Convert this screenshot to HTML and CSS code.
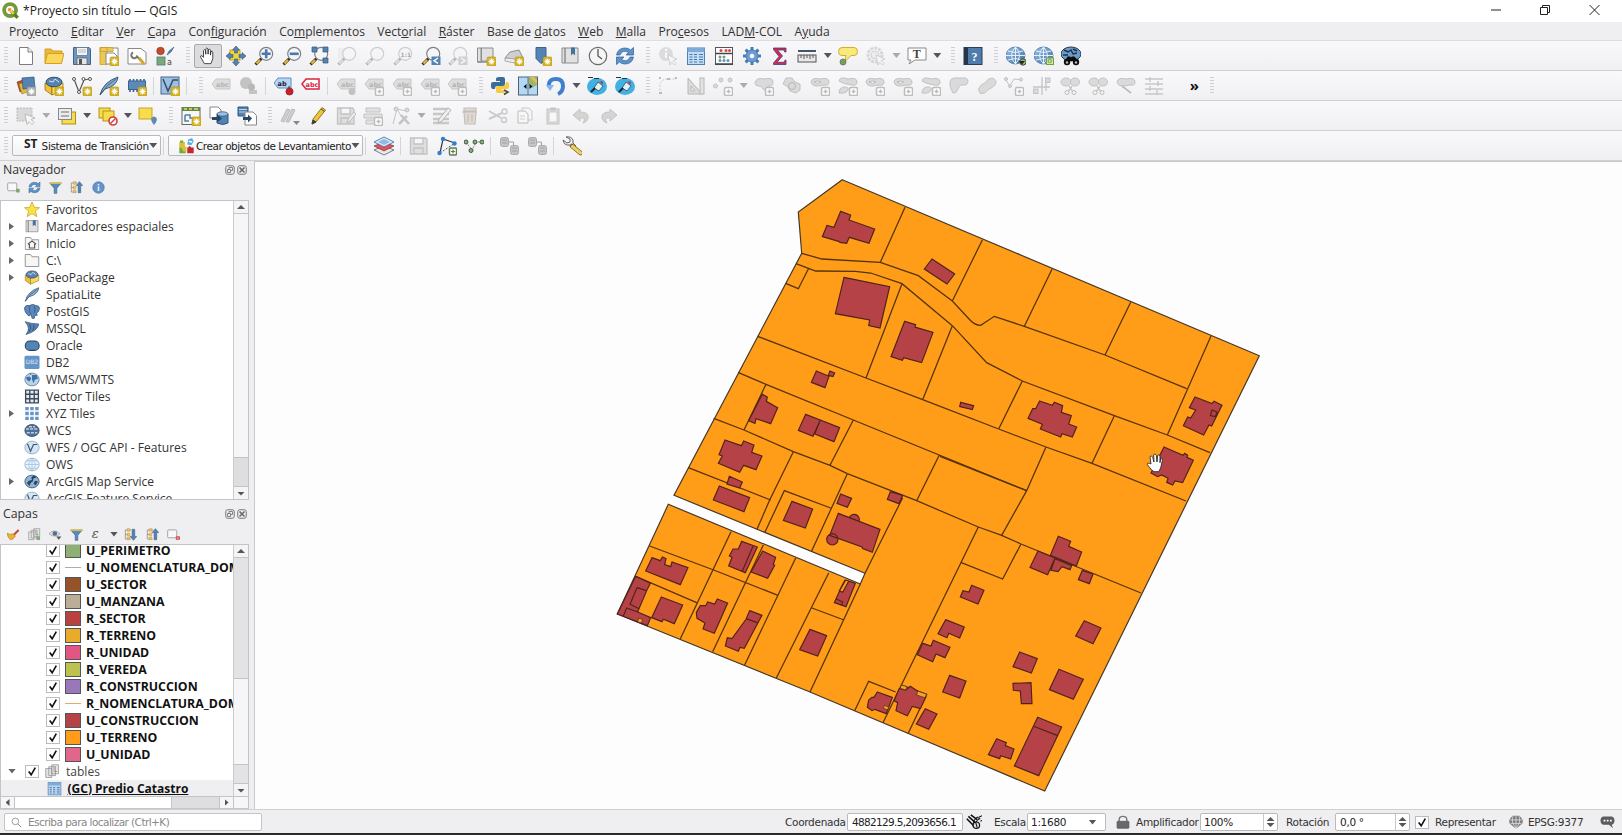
FILE: index.html
```html
<!DOCTYPE html>
<html lang="es">
<head>
<meta charset="utf-8">
<title>*Proyecto sin título — QGIS</title>
<link rel="stylesheet" href="styles.css">
</head>
<body>
<svg class="defs" aria-hidden="true">
<defs>
<linearGradient id="gb" x1="0" y1="0" x2="1" y2="1"><stop offset="0" stop-color="#9cc3ea"/><stop offset="1" stop-color="#3f6f9f"/></linearGradient>
<symbol id="star" viewBox="0 0 20 20"><rect x="11" y="11" width="9" height="9" rx="1.5" fill="#d9b526" stroke="#b0901c" stroke-width=".6"/><path d="M15.5 12.5v6M12.5 15.5h6M13.5 13.5l4 4M17.500 13.500l-4 4" stroke="#fff" stroke-width="1.100"/></symbol>
<symbol id="gbadge" viewBox="0 0 20 20"><rect x="11.500" y="11.500" width="8" height="8" rx="1.500" fill="#fff" stroke="#bdbcbc" stroke-width="1.500"/><path d="M15.500 13.500v4M13.500 15.500h4" stroke="#bdbcbc" stroke-width="1.500"/></symbol>
<symbol id="new" viewBox="0 0 20 20"><path d="M3.500 1.500h8.500l4.500 4.500v12.500h-13z" fill="#fff" stroke="#7c7c7c"/><path d="M12 1.500v4.500h4.500" fill="#eee" stroke="#7c7c7c"/></symbol>
<symbol id="open" viewBox="0 0 20 20"><path d="M1 17V3h6l2 2h9v3" fill="#e9b93c" stroke="#d5a021"/><path d="M1 17.500l2.500-10h16.500l-2.500 10z" fill="#fbd55c" stroke="#d5a021"/></symbol>
<symbol id="save" viewBox="0 0 20 20"><path d="M1.500 1.500h15.500l1.500 1.500v15.500h-17z" fill="#6d96c0" stroke="#3e648c"/><rect x="4.500" y="1.500" width="11" height="8" fill="#f1f3f5" stroke="#58799c" stroke-width=".8"/><path d="M6 4h8M6 6h8" stroke="#b9b9b9"/><rect x="5" y="12" width="10" height="6.500" fill="#e6e6e6" stroke="#666" stroke-width=".8"/><rect x="7" y="13" width="3" height="5" fill="#555"/></symbol>
<symbol id="lay" viewBox="0 0 20 20"><path d="M3 2h16v11h-16z" fill="#fff" stroke="#888"/><path d="M1 1.500h7v17H1zM1 1.500h13v4H1z" fill="#ecc952" stroke="#c5a032" stroke-width=".8"/><path d="M7 7h8l3 3v8H7z" fill="#fff" stroke="#888"/><use href="#star"/></symbol>
<symbol id="laym" viewBox="0 0 20 20"><path d="M1 2.500h13l5 4v11.500H1z" fill="#fff" stroke="#888"/><path d="M6 6.500a3 3 0 1 0 4 4l6 6" stroke="#777" fill="none" stroke-width="2"/><path d="M12 12l5 6" stroke="#d9a62a" stroke-width="3"/></symbol>
<symbol id="sty" viewBox="0 0 20 20"><circle cx="5.500" cy="5" r="3.800" fill="#c14b2c" stroke="#8c2f1a" stroke-width=".6"/><path d="M12 9l2-4 5-4-3 5z" fill="#5c87b4" stroke="#355a80" stroke-width=".6"/><rect x="2" y="11" width="8" height="8" fill="#7aa878" stroke="#4d7a7b" stroke-width=".8"/><text x="12" y="19" class="ti">a</text></symbol>
<symbol id="pan" viewBox="0 0 20 20"><path d="M6 18.500L2 11.500q-1-2 1-2l2 2V4q1-2 2.200 0l.3 4V2q1.200-2 2.400 0l.2 6 .4-5q1.500-1.500 2.200.5V9l.6-4q1.500-1 2 .8V13l-2 5.500z" fill="#fff" stroke="#222" stroke-width=".9"/></symbol>
<symbol id="pansel" viewBox="0 0 20 20"><rect x="4" y="4" width="10" height="10" fill="#f3d43b" stroke="#cda51f"/><path d="M10 0l3.500 4h-2v3h-3V4h-2zM10 20l3.500-4h-2v-3h-3v3h-2zM0 10l4-3.500v2h3v3H4v2zM20 10l-4-3.500v2h-3v3h3v2z" fill="#5583b3" stroke="#2f587f" stroke-width=".6"/></symbol>
<symbol id="mag" viewBox="0 0 20 20"><path d="M1.500 18.500l6-6" stroke="#3c3520" stroke-width="3"/><path d="M2.500 17.500l3.500-3.500" stroke="#e4bd35" stroke-width="2"/><circle cx="12.200" cy="7.800" r="6.500" fill="#f4f6f8" stroke="#808080" stroke-width="1.200"/></symbol>
<symbol id="zin" viewBox="0 0 20 20"><use href="#mag"/><path d="M12.200 3.300v9M7.700 7.800h9" stroke="#4a79ad" stroke-width="2.600"/></symbol>
<symbol id="zout" viewBox="0 0 20 20"><use href="#mag"/><path d="M7.700 7.800h9" stroke="#4a79ad" stroke-width="2.600"/></symbol>
<symbol id="zfull" viewBox="0 0 20 20"><use href="#mag"/><path d="M3 1h5v5H3zM14 1h5v5h-5zM14 12h5v5h-5z" fill="#5583b3" stroke="#2f587f" stroke-width=".7"/></symbol>
<symbol id="zsel" viewBox="0 0 20 20"><rect x="1" y="2" width="12" height="11" fill="#ddd"/><use href="#mag"/></symbol>
<symbol id="z11" viewBox="0 0 20 20"><use href="#mag"/><text x="7.500" y="10.500" class="t11">1:1</text></symbol>
<symbol id="zprev" viewBox="0 0 20 20"><use href="#mag"/><rect x="10.500" y="10.500" width="9" height="8.500" fill="#5583b3"/><path d="M17 12l-4 2.700 4 2.700" stroke="#fff" fill="none" stroke-width="1.400"/></symbol>
<symbol id="znext" viewBox="0 0 20 20"><use href="#mag"/><rect x="10.500" y="10.500" width="9" height="8.500" fill="#8b8b8b"/><path d="M13 12l4 2.700-4 2.700" stroke="#fff" fill="none" stroke-width="1.400"/></symbol>
<symbol id="map1" viewBox="0 0 20 20"><path d="M5 2h12v13H5zM1.500 2h4v14h-4z" fill="#e1e1e1" stroke="#8d8d8d"/><path d="M1.500 16h12" stroke="#8d8d8d" stroke-width="1.500"/><use href="#star"/></symbol>
<symbol id="map3" viewBox="0 0 20 20"><path d="M1 12l5-6 9-2 4 8-8 3z" fill="#cfcfcf" stroke="#8d8d8d"/><path d="M1 12l10 1 8-1v2l-8 3-10-2z" fill="#eee" stroke="#8d8d8d" stroke-width=".7"/><use href="#star"/></symbol>
<symbol id="bmk" viewBox="0 0 20 20"><path d="M4 1.500h10v13l-5 3-5-5z" fill="#5583b3" stroke="#3b648d"/><use href="#star"/></symbol>
<symbol id="bmks" viewBox="0 0 20 20"><path d="M2 2h3v15H2zM5 2h13v15H5z" fill="#e1e1e1" stroke="#8d8d8d"/><path d="M11 1.500h4v8l-2-2-2 2z" fill="#44709c"/></symbol>
<symbol id="clock" viewBox="0 0 20 20"><circle cx="10" cy="10" r="8.700" fill="#f5f5f5" stroke="#6d6d6d" stroke-width="1.200"/><path d="M10 3v7l4 3" stroke="#555" fill="none" stroke-width="1.300"/></symbol>
<symbol id="ref" viewBox="0 0 20 20"><path d="M1.500 9Q3 2 10 2q3.500 0 5.500 2l3-2.500V9H11l2.500-2.500Q7.500 3 5 9z" fill="#5c93cc" stroke="#2d608f" stroke-width=".7"/><path d="M18.500 11Q17 18 10 18q-3.500 0-5.500-2l-3 2.500V11H9l-2.500 2.500Q12.500 17 15 11z" fill="#5c93cc" stroke="#2d608f" stroke-width=".7"/></symbol>
<symbol id="ident" viewBox="0 0 20 20"><circle cx="8" cy="8" r="7" fill="#aaa"/><path d="M8 3v2M8 6.500v5.500" stroke="#fff" stroke-width="2"/><path d="M10 9l9 4-4 1.500 3 3-1.500 1.500-3-3-1.500 3z" fill="#fff" stroke="#888"/></symbol>
<symbol id="table" viewBox="0 0 20 20"><rect x="1.500" y="2" width="17" height="16.500" fill="#c4dcf3" stroke="#5180ae"/><rect x="1.500" y="2" width="17" height="4" fill="#7fabd8"/><path d="M3.500 8.500h3M8 8.500h3M13 8.500h4M3.500 11h3M8 11h3M13 11h4M3.500 13.500h3M8 13.500h3M13 13.500h4M3.500 16h3M8 16h3M13 16h4" stroke="#4279b1" stroke-width="1.200"/></symbol>
<symbol id="abac" viewBox="0 0 20 20"><rect x="1.500" y="1.500" width="17" height="17" fill="#fff" stroke="#555"/><path d="M1 18h18M2 7.500h16" stroke="#444" stroke-width="1.400"/><circle cx="7" cy="4.500" r="1.500" class="r"/><circle cx="12" cy="4.500" r="1.500" class="r"/><circle cx="15.500" cy="4.500" r="1.500" class="r"/><circle cx="6" cy="11" r="1.500" class="g"/><circle cx="10" cy="11" r="1.500" class="g"/><circle cx="14" cy="14.500" r="1.500" class="b"/><circle cx="6" cy="14.500" r="1.500" class="b"/><circle cx="10" cy="14.500" r="1.500" class="b"/></symbol>
<symbol id="gear" viewBox="0 0 20 20"><path d="M10 1v18M1 10h18M3.600 3.600l12.800 12.800M16.400 3.600L3.600 16.400" stroke="#487cb4" stroke-width="3"/><circle cx="10" cy="10" r="6" fill="#6c9dd0" stroke="#487cb4"/><circle cx="10" cy="10" r="2.300" fill="#f5f5f7"/></symbol>
<symbol id="sigma" viewBox="0 0 20 20"><path d="M3.500 2h12.500v4h-1.200l-1-2H7.500l5 6-5.500 6.300h7l1.200-2.300H16V18.500H3.500V17L9 10.500 3.500 3.500z" fill="#d42b50" stroke="#4b3a80" stroke-width=".8"/></symbol>
<symbol id="ruler" viewBox="0 0 20 20"><path d="M1 5h18" stroke="#42556b" stroke-width="2"/><rect x="1" y="9" width="18" height="7" fill="#e8e8e8" stroke="#555"/><path d="M4 9v3M7 9v4M10 9v3M13 9v4M16 9v3" stroke="#555"/></symbol>
<symbol id="tip" viewBox="0 0 20 20"><path d="M4 1.500h12q3.500 0 3.500 4t-3.500 4h-3l-6 6 1-6H4Q.5 9.500.5 5.500t3.500-4z" fill="#fae97c" stroke="#cdb030"/><circle cx="5" cy="16" r="3" fill="#7d9d59" stroke="#4f7a6a" stroke-width=".8"/></symbol>
<symbol id="act" viewBox="0 0 20 20"><circle cx="9" cy="9" r="7" fill="none" stroke="#999" stroke-width="3" stroke-dasharray="3 1"/><circle cx="9" cy="9" r="4" fill="#ddd" stroke="#888"/><path d="M10 9l9 4-4 1.500 3 3-1.500 1.500-3-3-1.500 3z" fill="#fff" stroke="#888"/></symbol>
<symbol id="txt" viewBox="0 0 20 20"><path d="M1 2h18v12H8l-6 4 2-4H1z" fill="#fff" stroke="#8a8a8a"/><text x="5.800" y="11.800" class="tt">T</text></symbol>
<symbol id="help" viewBox="0 0 20 20"><rect x="1" y="1.500" width="18" height="17" fill="#4e7cac" stroke="#293f56"/><rect x="1" y="1.500" width="4" height="17" fill="#263645"/><text x="8.500" y="14.500" class="th">?</text></symbol>
<symbol id="globe" viewBox="0 0 20 20"><ellipse cx="9.500" cy="9.500" rx="9.500" ry="8.500" fill="url(#gb)" stroke="#456f99" stroke-width=".7"/><path d="M0 9.500h19M2 5q7.500 3 15 0M2 14q7.500-3 15 0M9.500 1v17M9.500 1q-8 8.500 0 17M9.500 1q8 8.500 0 17" fill="none" stroke="#e4f0fb" stroke-width="1"/></symbol>
<symbol id="globe1" viewBox="0 0 20 20"><use href="#globe"/><circle cx="17" cy="16" r="3.200" fill="#8fc070" stroke="#3a4a32"/><path d="M13 15h6l-3 3.500z" fill="#222"/></symbol>
<symbol id="globe2" viewBox="0 0 20 20"><use href="#globe"/><rect x="12.500" y="12" width="7" height="6.500" fill="#cfe5b0" stroke="#6fa03c"/><circle cx="15.700" cy="15" r="1.700" fill="none" stroke="#6fa03c"/></symbol>
<symbol id="globe3" viewBox="0 0 20 20"><ellipse cx="10" cy="8" rx="10" ry="7" fill="#6c9aca" stroke="#24384b"/><path d="M3 4l4 2 3-2 2 4 4-1M2 9h5M12 3l4 2" stroke="#1f3347" fill="none" stroke-width="1.500"/><path d="M4 15l2.500-4.500h2.500l1 1 1-1h2.500l3.500 4.500z" fill="#0c0c0c"/><circle cx="6" cy="16" r="3.200" fill="#0c0c0c"/><circle cx="15" cy="16" r="3.200" fill="#0c0c0c"/><circle cx="6" cy="16.500" r="1.200" fill="#bbb"/><circle cx="15" cy="16.500" r="1.200" fill="#bbb"/></symbol>
<symbol id="vlayer" viewBox="0 0 20 20"><path d="M1 6l9-3 3 9-9 4z" fill="#b84f2b" stroke="#813418" stroke-width=".6"/><path d="M3 8l10-3 3 9-10 4z" fill="#e3bb3b" stroke="#98761a" stroke-width=".6"/><path d="M6 2l12-1 1 11-12 1z" fill="#5583b3" stroke="#2e5478" stroke-width=".7"/><use href="#star" class="off2"/></symbol>
<symbol id="gpkg" viewBox="0 0 20 20"><path d="M1 7l7 4v8l-7-5z" fill="#f0c134" stroke="#8a6612" stroke-width=".7"/><path d="M8 11l11-4v7l-11 5z" fill="#fbd95f" stroke="#8a6612" stroke-width=".7"/><ellipse cx="10" cy="6" rx="8" ry="4.800" fill="#5583b3" stroke="#24384b" stroke-width=".8"/><path d="M5 5l4 1 2-3 4 3" stroke="#dbe8f4" fill="none"/></symbol>
<symbol id="gpkgn" viewBox="0 0 20 20"><use href="#gpkg"/><use href="#star"/></symbol>
<symbol id="shp" viewBox="0 0 20 20"><path d="M2 3l5 13 5-12 5-1" fill="none" stroke="#555" stroke-width="1.200"/><circle cx="2" cy="3" r="1.500" fill="#fff" stroke="#555"/><circle cx="11.500" cy="3" r="1.500" fill="#fff" stroke="#555"/><circle cx="18" cy="3" r="1.500" fill="#fff" stroke="#555"/><circle cx="7" cy="16" r="1.500" fill="#fff" stroke="#555"/><use href="#star"/></symbol>
<symbol id="fea" viewBox="0 0 20 20"><path d="M1 19Q4 6 19 1q-1 9-13 12z" fill="#84aad1" stroke="#38597a"/><path d="M1 19Q8 8 17 3" stroke="#38597a" fill="none" stroke-width=".8"/></symbol>
<symbol id="fean" viewBox="0 0 20 20"><use href="#fea"/><use href="#star"/></symbol>
<symbol id="chip" viewBox="0 0 20 20"><path d="M3 3v13M6.500 3v13M10 3v13M13.500 3v13M17 3v13" stroke="#3b648d" stroke-width="1.600"/><rect x="1.500" y="5" width="17" height="8.500" fill="#5c8abb" stroke="#3b648d"/><use href="#star"/></symbol>
<symbol id="virt" viewBox="0 0 20 20"><rect x="1" y="1" width="18" height="17" fill="#9dbfe1" stroke="#45698e"/><path d="M3 3l5 12 5-11 5 0" fill="none" stroke="#374d63" stroke-width="1.500"/><use href="#star"/></symbol>
<symbol id="lab" viewBox="0 0 20 20"><path d="M1 8l4-5h14v10H5z" fill="#dedddd" stroke="#c8c7c7"/><text x="5" y="11" class="ta">abc</text></symbol>
<symbol id="labn" viewBox="0 0 20 20"><use href="#lab"/><use href="#gbadge"/></symbol>
<symbol id="labp" viewBox="0 0 20 20"><use href="#lab"/><circle cx="16" cy="15.500" r="3.500" fill="#c3c2c2"/></symbol>
<symbol id="pie" viewBox="0 0 20 20"><circle cx="7" cy="7" r="6" fill="#c4c3c3"/><path d="M10 12v6h8v-4h-4v-2z" fill="#c4c3c3"/><circle cx="12.500" cy="11" r="3.500" fill="#b8b7b7"/></symbol>
<symbol id="labb" viewBox="0 0 20 20"><path d="M0 7l4-5h13v10H4z" fill="#b8d5f1" stroke="#5c8fc2"/><text x="3.500" y="10" class="ta dk">ab</text><path d="M15 10v4" stroke="#333"/><circle cx="15.500" cy="15.500" r="3.600" fill="#c3202b" stroke="#84141c" stroke-width=".6"/></symbol>
<symbol id="labr" viewBox="0 0 20 20"><path d="M1 8l4-5h13v10H5z" fill="#fff" stroke="#dc2340" stroke-width="1.500"/><text x="4.500" y="10.500" class="ta rd">abc</text></symbol>
<symbol id="py" viewBox="0 0 20 20"><path d="M9 1h4q2 0 2 2v5q0 2-2 2H7q-2 0-2 3H3q-2 0-2-3V8q0-2 2-2h7V5H6V3q0-2 3-2z" fill="#3a6c9c"/><path d="M12 17H8q-2 0-2-2v-3q0-2 2-2h5q3 0 3-4h1q2 0 2 3v2q0 2-2 2h-6v1h4v1q0 2-3 2z" fill="#f6cb3d"/><path d="M14 14l4 2-4 2.500" stroke="#444" stroke-width="1.500" fill="none"/></symbol>
<symbol id="comp" viewBox="0 0 20 20"><rect x=".5" y="1" width="19" height="18" fill="#b3d8f4" stroke="#4b6378"/><path d="M10 1h9v8l-5 3-4-4z" fill="#9db46e"/><path d="M12 1l7 7v-4l-4-3z" fill="#e6c24b"/><path d="M10 1v18" stroke="#56748e"/><path d="M8.500 8v5l-3-2.500zM11.500 8v5l3-2.500z" fill="#111"/></symbol>
<symbol id="rel" viewBox="0 0 20 20"><path d="M3 11Q2 3 10 3q7 0 7 7 0 6-5 8" fill="none" stroke="#3f7fcf" stroke-width="4"/><path d="M0 9h8l-4 6z" fill="#85b4ea"/></symbol>
<symbol id="fish" viewBox="0 0 20 20"><ellipse cx="10" cy="10.500" rx="10" ry="8.500" fill="#3fb1e4"/><path d="M7 12l4-6 5 4-4 5z" fill="#e4eef4" stroke="#2b4a60" stroke-width=".8"/><path d="M4 16l4-4" stroke="#222" stroke-width="2"/><path d="M13 5l3 1-1 3z" fill="#c82a2a"/><path d="M1 1.500h5M7 2.500h5" stroke="#234" stroke-width="1.200"/></symbol>
<symbol id="cad1" viewBox="0 0 20 20"><path d="M2 18V9Q3 3 10 3h8" fill="none" stroke="#c8c7c7" stroke-dasharray="2 1.500"/><path d="M1 2h2M9 3h3M17 2h2M1 17h3" stroke="#bbb" stroke-width="2"/></symbol>
<symbol id="cad2" viewBox="0 0 20 20"><path d="M2 2l14 16H2zM5 10l4 5H5z" fill="#dcdbdb" stroke="#b8b7b7" fill-rule="evenodd"/><rect x="14" y="2" width="4" height="16" fill="#e4e3e3" stroke="#b8b7b7"/></symbol>
<symbol id="pts" viewBox="0 0 20 20"><circle cx="8" cy="4" r="2" class="gg"/><circle cx="17" cy="4" r="2" class="gg"/><circle cx="2.500" cy="10" r="2" class="gg"/><use href="#gbadge"/></symbol>
<symbol id="blob" viewBox="0 0 20 20"><path d="M1 7Q2 1 10 3q9-2 9 3 0 5-5 4-2 6-5 3-1-3-4-3-4 0-4-3z" class="gg"/><use href="#gbadge"/></symbol>
<symbol id="blob2" viewBox="0 0 20 20"><path d="M1 5Q2 0 10 3q9-2 9 3 0 4-5 3-9-1-13-4zM1 17q0-6 6-6 4 0 3 3-2 4-9 3z" class="gg"/><use href="#gbadge"/></symbol>
<symbol id="ring" viewBox="0 0 20 20"><path d="M1 6Q2 1 10 3q9-2 9 3 0 4-5 3-5 1-8 1-4 0-5-4z" class="gg"/><path d="M4 6q3-2 7 0-3 3-7 0z" fill="#f8f8f8" stroke="#bbb"/><use href="#gbadge"/></symbol>
<symbol id="hex" viewBox="0 0 20 20"><path d="M4 2h6l3 4 5 2v6l-4 3-6-2-2-4-5-3z" class="gg"/><circle cx="10" cy="10" r="3.500" fill="none" stroke="#b8b7b7"/></symbol>
<symbol id="horn" viewBox="0 0 20 20"><path d="M1 9Q0 1 8 2h9q4 3 0 7-7-1-8 4-2 5-5 4-2-3-3-8z" class="gg"/></symbol>
<symbol id="saus" viewBox="0 0 20 20"><path d="M2 12q2-4 6-5 3-5 7-5 6 2 3 7-3 3-6 4-5 6-9 4-2-2-1-5z" class="gg"/></symbol>
<symbol id="cutb" viewBox="0 0 20 20"><ellipse cx="6" cy="6" rx="5" ry="4" class="gg"/><ellipse cx="15" cy="6" rx="4.500" ry="4" class="gg"/><path d="M9 10l4 6M12 10l-4 6" stroke="#bbb" stroke-width="1.200"/><circle cx="7" cy="16.500" r="2" fill="#f5f5f5" stroke="#bbb"/><circle cx="14" cy="16.500" r="2" fill="#f5f5f5" stroke="#bbb"/></symbol>
<symbol id="tail" viewBox="0 0 20 20"><path d="M1 6Q2 1 10 3q9-2 9 3 0 4-5 3-5 1-8 1-4 0-5-4z" class="gg"/><path d="M6 10l9 7" stroke="#bbb" stroke-width="1.600"/></symbol>
<symbol id="vtx" viewBox="0 0 20 20"><path d="M1 3l5 7 4-7 8 1" fill="none" stroke="#c5c4c4"/><circle cx="2" cy="3" r="1.500" class="gg"/><circle cx="6" cy="10" r="1.500" class="gg"/><circle cx="17" cy="3.500" r="1.500" class="gg"/><use href="#gbadge"/></symbol>
<symbol id="crs" viewBox="0 0 20 20"><path d="M10 1v18M1 11h17M14 6v9" stroke="#c5c4c4" stroke-width="1.300"/><rect x="1.500" y="13" width="4.500" height="4.500" class="gg"/><rect x="13.500" y="2" width="4.500" height="4.500" class="gg"/></symbol>
<symbol id="algn" viewBox="0 0 20 20"><path d="M1 3h18M1 8h18M1 13h18M1 18h18" stroke="#c8c7c7" stroke-width="1.400"/><path d="M6 1v5M14 5v5M6 10v5M13 14v5" stroke="#c8c7c7" stroke-width="1.400"/></symbol>
<symbol id="sel" viewBox="0 0 20 20"><rect x="1" y="2" width="15" height="13" fill="#dad9d9" stroke="#bbb" stroke-dasharray="2 1"/><path d="M9 8l10 4-4 1.500 3 3-2 2-3-3-2 3z" fill="#f8f8f8" stroke="#bdbcbc"/></symbol>
<symbol id="self" viewBox="0 0 20 20"><rect x="5" y="6" width="13.500" height="12" fill="#f7dc4c" stroke="#ab8e1c"/><rect x="1.500" y="2.500" width="13" height="11" fill="#ececec" stroke="#888"/><path d="M4 6h8M4 10h8" stroke="#999" stroke-width="1.600"/></symbol>
<symbol id="desel" viewBox="0 0 20 20"><rect x="1" y="2" width="11" height="10" fill="#f7dc4c" stroke="#b59516"/><rect x="5" y="5" width="11" height="10" fill="#f7dc4c" stroke="#b59516"/><circle cx="15" cy="15" r="4" fill="#fff" stroke="#d43a3a" stroke-width="1.600"/><path d="M12.500 17.500l5-5" stroke="#d43a3a" stroke-width="1.500"/></symbol>
<symbol id="selv" viewBox="0 0 20 20"><rect x="1" y="2" width="13" height="11" fill="#f7dc4c" stroke="#c7a725"/><path d="M16 19q-4-5-2.500-7 2.500-3 5 0 1.500 2-2.500 7z" fill="#6288ad"/></symbol>
<symbol id="ant" viewBox="0 0 20 20"><rect x="1" y="1.500" width="18" height="17" fill="#f7f7f7" stroke="#666"/><rect x="1" y="1" width="18" height="4" fill="#5c8a4d"/><path d="M3 3h3M8 3h3M13 3h4" stroke="#f5d55a" stroke-width="1.500"/><path d="M4 9h5v3h5v4M4 9v6h4" fill="none" stroke="#557da6" stroke-width="1.500"/><use href="#star"/></symbol>
<symbol id="dbin" viewBox="0 0 20 20"><path d="M1 1h8l3 3v8H1z" fill="#fff" stroke="#888"/><path d="M8 8v9q6 3 11 0V8z" fill="#5382b3" stroke="#2f587f"/><ellipse cx="13.500" cy="8" rx="5.500" ry="2.200" fill="#9dbfe1" stroke="#2f587f" stroke-width=".8"/><path d="M3 11h5V8.500l5 4-5 4V14H3z" fill="#26476a"/></symbol>
<symbol id="dbout" viewBox="0 0 20 20"><path d="M1 1h10v9H1z" fill="#5382b3" stroke="#2f587f"/><path d="M2 3.500h8M2 6h8" stroke="#bdd4ea"/><path d="M8 6h8l3.500 3.500V19H8z" fill="#fff" stroke="#888"/><path d="M6 11h5V8.500l4 4-4 4V14H6z" fill="#26476a"/></symbol>
<symbol id="pens" viewBox="0 0 20 20"><path d="M1 15L7 3l3 1-6 12zM6 16L12 3l3 1-6 12z" fill="#cfcece" stroke="#bbbaba"/><path d="M13 15h7l-3.500 4z" fill="#888"/></symbol>
<symbol id="pen" viewBox="0 0 20 20"><path d="M4 18l1-5L14 1.500l3.500 2.500L8 16z" fill="#f1c62f" stroke="#8a6a1c" stroke-width=".9"/><path d="M4 18l1-4 3 2zM13 3l3.500 2.500" fill="#333" stroke="#444"/></symbol>
<symbol id="saveg" viewBox="0 0 20 20"><path d="M1.500 2h15l1.500 1.500V18H1.500zM5 2v6h9V2M5 18v-6h9v6" fill="#dfdede" stroke="#c3c2c2" stroke-width="1.300"/></symbol>
<symbol id="saven" viewBox="0 0 20 20"><use href="#saveg"/><path d="M11 17l1-4 6-7 2 2-6 7z" fill="#eee" stroke="#bbb"/></symbol>
<symbol id="addf" viewBox="0 0 20 20"><path d="M3 2h14v4H3zM1 8h18v4H1zM3 14h9v4H3z" fill="#e2e1e1" stroke="#c3c2c2"/><use href="#gbadge"/></symbol>
<symbol id="vt" viewBox="0 0 20 20"><path d="M2 18L6 3l9 2M6 3l4 7" fill="none" stroke="#c5c4c4"/><circle cx="5" cy="3" r="2" class="gg"/><circle cx="16" cy="4" r="2" class="gg"/><path d="M8 18l8-8M10 9l8 9" stroke="#c5c4c4" stroke-width="2.500"/></symbol>
<symbol id="multi" viewBox="0 0 20 20"><path d="M1 3h16M1 8h16M1 13h16M1 17h16" stroke="#c8c7c7" stroke-width="2.500"/><path d="M6 17l1-4L16 2l3 2-9 11z" fill="#eee" stroke="#b5b4b4"/></symbol>
<symbol id="del" viewBox="0 0 20 20"><path d="M2 6h15M4 2h12v3H4zM4 6h12l-1 12H5zM8 8v8M12 8v8" fill="#e0d9d4" stroke="#c4beba" stroke-width="1.200"/></symbol>
<symbol id="cut" viewBox="0 0 20 20"><path d="M1 5l12 7M1 13l13-6" stroke="#cccbcb" stroke-width="2"/><circle cx="16.500" cy="5.500" r="2.500" fill="none" stroke="#cccbcb" stroke-width="1.500"/><circle cx="16" cy="14" r="2.500" fill="none" stroke="#cccbcb" stroke-width="1.500"/></symbol>
<symbol id="copy" viewBox="0 0 20 20"><path d="M7 2h7l3 3v9H7z" fill="#f4f4f4" stroke="#cbcaca"/><path d="M3 5h7l3 3v9H3z" fill="#f7f7f7" stroke="#bdbcbc"/><path d="M5 10h5M5 13h5" stroke="#ccc"/></symbol>
<symbol id="paste" viewBox="0 0 20 20"><rect x="4" y="3" width="12" height="15" fill="#dcdbdb" stroke="#c5c4c4"/><rect x="6" y="6" width="8" height="10" fill="#f7f7f7" stroke="#ccc"/><rect x="7.500" y="1.500" width="5" height="3" fill="#c5c4c4"/></symbol>
<symbol id="undo" viewBox="0 0 20 20"><path d="M2 9l7-6v3q9 0 8 6-1 4-5 5 4-6-3-5v3z" fill="#d6d4d2" stroke="#c5c4c3"/></symbol>
<symbol id="redo" viewBox="0 0 20 20"><path d="M18 9l-7-6v3q-9 0-8 6 1 4 5 5-4-6 3-5v3z" fill="#d6d4d2" stroke="#c5c4c3"/></symbol>
<symbol id="stack" viewBox="0 0 20 20"><path d="M10 10l10 4-10 5L0 14z" fill="#e9e9ee" stroke="#404b6b" stroke-width=".7"/><path d="M10 6l10 4-10 5L0 10z" fill="#e2535a" stroke="#8c2e38" stroke-width=".7"/><path d="M10 1l10 5-10 5L0 6z" fill="#dceaf8" stroke="#33689c" stroke-width=".8"/><path d="M10 3l6 3-6 3-6-3z" fill="#8fbce6"/></symbol>
<symbol id="tri" viewBox="0 0 20 20"><path d="M3 17L6 3l12 4" fill="none" stroke="#333" stroke-width="1.200"/><path d="M3 17l15-10" stroke="#555" stroke-dasharray="2 1.500"/><circle cx="6" cy="3" r="2.200" fill="#2f7fd6"/><circle cx="17.500" cy="7.500" r="2.200" fill="#2f7fd6"/><circle cx="2.500" cy="17" r="2.200" fill="#2f7fd6"/><rect x="12.500" y="12" width="7" height="7" rx="1" fill="#fff" stroke="#5c7d52" stroke-width="1.500"/><path d="M16 13.500v4M14 15.500h4" stroke="#5c7d52" stroke-width="1.200"/></symbol>
<symbol id="nodes" viewBox="0 0 20 20"><path d="M2 6l6 8 4-8h7" fill="none" stroke="#888" stroke-dasharray="2 1"/><circle cx="2" cy="6" r="2" class="gn"/><circle cx="11" cy="6" r="2" class="gn"/><circle cx="18" cy="6" r="2" class="gn"/><circle cx="7" cy="14.500" r="2" class="gn"/></symbol>
<symbol id="dbs" viewBox="0 0 20 20"><rect x="1.500" y="1.500" width="8" height="9" rx="2" fill="#c6c5c5" stroke="#acabab"/><rect x="11.500" y="9.500" width="8" height="9" rx="2" fill="#c6c5c5" stroke="#acabab"/><path d="M9.500 6h5v4M3 4h5M3 7h5M13 12h5M13 15h5" fill="none" stroke="#a4a3a3"/></symbol>
<symbol id="wrench" viewBox="0 0 20 20"><path d="M1 4l4 3 3-1 0-3-4-2q5-1 7 3v3l3 3-3 2-3-3q-6 1-7-5z" fill="#eee" stroke="#666"/><path d="M10 10l8.500 7" stroke="#806a22" stroke-width="4.500" stroke-linecap="round"/><path d="M10.500 10.500l8 6.500" stroke="#edd067" stroke-width="3" stroke-linecap="round"/></symbol>
<symbol id="fav" viewBox="0 0 20 20"><path d="M10 0l3 7 7 .5-5.500 4.500 2 7.500L10 15.500 3.500 19.500l2-7.500L0 7.500 7 7z" fill="#fae14a" stroke="#c6a526"/></symbol>
<symbol id="fold" viewBox="0 0 20 20"><path d="M1 18V2h7l2 3h9v13z" fill="#f6f6f6" stroke="#8d8d8d" stroke-width="1.200"/></symbol>
<symbol id="home" viewBox="0 0 20 20"><use href="#fold"/><path d="M4.500 11l5.500-4.500 5.500 4.500M6.500 10.500V16h7v-5.500" fill="none" stroke="#555" stroke-width="1.500"/></symbol>
<symbol id="pg" viewBox="0 0 20 20"><path d="M0 5q1-4 7-3 4-3 8 0 5 0 5 4-1 5-4 6l1 3h-3l-1 4h-3l-1-5-3 2Q3 14 2 12 0 9 0 5z" fill="#5b89b9" stroke="#2f5275"/><path d="M7 3q-1 6 1 10M13 3q2 4 0 9" fill="none" stroke="#2f5275"/></symbol>
<symbol id="ms" viewBox="0 0 20 20"><path d="M1 1q9 3 18 3-1 9-17 14 7-8-1-17z" fill="#5583b3" stroke="#335a80"/><path d="M7 4q3 5-1 11M12 5q2 4-1 8" stroke="#28496a" fill="none"/></symbol>
<symbol id="ora" viewBox="0 0 20 20"><rect x="1" y="4" width="18.500" height="12.500" rx="6" fill="#5284ba" stroke="#2b415a" stroke-width="1.400"/></symbol>
<symbol id="db2" viewBox="0 0 20 20"><rect x="0" y="1" width="20" height="17.500" rx="2" fill="#6595c8"/><text x="1.500" y="12.500" class="td">DB2</text></symbol>
<symbol id="wms" viewBox="0 0 20 20"><ellipse cx="10" cy="10" rx="9.500" ry="8.500" fill="#b8d3ec" stroke="#4d7298"/><path d="M2 7l5-1 2 3-3 4-3-3zM10 4l6 0 2 5-4 1-2 5-2-5zM6 2l4 0-2 2z" fill="#3f6f9f"/></symbol>
<symbol id="vtl" viewBox="0 0 20 20"><path d="M1.500 1.500h17v17h-17zM7 1v18M13 1v18M1 7h18M1 13h18" fill="#e3ebf5" stroke="#3c4a5c" stroke-width="1.800"/></symbol>
<symbol id="xyz" viewBox="0 0 20 20"><path d="M1 3.500h18M1 10h18M1 16.500h18" stroke="#6595c8" stroke-width="4.600" stroke-dasharray="4.700 1.900"/></symbol>
<symbol id="wcs" viewBox="0 0 20 20"><ellipse cx="10" cy="10" rx="9.500" ry="8" fill="#4f7199" stroke="#2b3d52"/><path d="M2 8h16M3 13h14M6 5h8" stroke="#b9d0e8" stroke-width="1.700" stroke-dasharray="4 1.500"/></symbol>
<symbol id="wfs" viewBox="0 0 20 20"><ellipse cx="10" cy="10" rx="9.500" ry="8.500" fill="#d4e5f5" stroke="#7da0c2"/><path d="M4 5l4 10 4-9h5" fill="none" stroke="#40556b" stroke-width="1.600"/></symbol>
<symbol id="ows" viewBox="0 0 20 20"><ellipse cx="10" cy="10" rx="9.500" ry="8.500" fill="#eaf3fb" stroke="#7da7d0"/><path d="M1 10h18M3 5h14M3 15h14M10 1.500v17M10 1.500q-9 8.500 0 17M10 1.500q9 8.500 0 17" fill="none" stroke="#9ec0e2"/></symbol>
<symbol id="arc" viewBox="0 0 20 20"><ellipse cx="10" cy="10" rx="9.500" ry="8.500" fill="#8fb4da" stroke="#2e475f"/><path d="M3 12l4 4 1-4 3-2 1-4 5-2-5-2-3 3 1 3-4 1zM14 9l4 1-3 5-3-2z" fill="#2c435a"/></symbol>
<symbol id="addl" viewBox="0 0 20 20"><rect x="1" y="3" width="14" height="12" rx="1.500" fill="#f8f8f8" stroke="#999" stroke-width="1.300"/><rect x="14" y="12" width="5.500" height="5.500" rx="1" fill="#7da670"/></symbol>
<symbol id="reml" viewBox="0 0 20 20"><rect x="1" y="3" width="14" height="12" rx="1.500" fill="#f8f8f8" stroke="#999" stroke-width="1.300"/><rect x="13.500" y="12.500" width="6.500" height="5.500" rx="1" fill="#d5474c"/><path d="M15 15.300h3.500" stroke="#fff"/></symbol>
<symbol id="filt" viewBox="0 0 20 20"><path d="M1 3h18l-7 8v8H8v-8z" fill="#5b8bbd" stroke="#3a6790"/><path d="M1 1.500h18v3H1z" fill="#d9c160"/></symbol>
<symbol id="coll" viewBox="0 0 20 20"><path d="M2 3h9M2 3v14h8M2 10h5" stroke="#777" fill="none"/><path d="M5 1h4v4H5zM5 8h4v4H5zM5 14h4v4H5z" fill="#f2c660" stroke="#c08a2d" stroke-width=".7"/><path d="M14.500 1l5 6h-3v11h-4V7h-3z" fill="#5583b3" stroke="#2f587f" stroke-width=".8"/></symbol>
<symbol id="expa" viewBox="0 0 20 20"><path d="M2 3h9M2 3v14h8M2 10h5" stroke="#777" fill="none"/><path d="M5 1h4v4H5zM5 8h4v4H5zM5 14h4v4H5z" fill="#f2c660" stroke="#c08a2d" stroke-width=".7"/><path d="M14.500 19l5-6h-3V2h-4v11h-3z" fill="#5583b3" stroke="#2f587f" stroke-width=".8"/></symbol>
<symbol id="info" viewBox="0 0 20 20"><circle cx="10" cy="10" r="8.800" fill="#6595c8" stroke="#41709e"/><path d="M10 4.500v2.500M10 8.500v7" stroke="#e4eefa" stroke-width="2.400"/></symbol>
<symbol id="brush" viewBox="0 0 20 20"><path d="M9 12l9-9" stroke="#c74a32" stroke-width="3"/><path d="M0 8q6 3 9 1l4 3q-3 6-8 6-4-4-5-10z" fill="#eab435" stroke="#b77d1d"/></symbol>
<symbol id="grp" viewBox="0 0 20 20"><path d="M1 6h8v12H1zM5 3.500h9v12H5zM9 1h9v12H9z" fill="#e4e4e4" stroke="#929292"/><path d="M12 4v6h4" fill="none" stroke="#8a8a8a"/></symbol>
<symbol id="grpn" viewBox="0 0 20 20"><use href="#grp"/><rect x="13" y="13" width="5.500" height="5.500" fill="#83ad78"/></symbol>
<symbol id="eye" viewBox="0 0 20 20"><path d="M0 9q8-9 17 0-8 7-17 0z" fill="#e6e6e6" stroke="#8f8f8f"/><circle cx="9" cy="8.500" r="3.600" fill="#506f93"/><path d="M11 13h8l-4 5z" fill="#555"/></symbol>
<symbol id="cen" viewBox="0 0 20 20"><path d="M9 16q-1-8 5-12l3 2q-6 3-6 10" fill="#fff" stroke="#222" stroke-width="1.400"/><path d="M1 6l8 8M3 3l9 8M6 1l8 6" stroke="#111" stroke-width="2"/><circle cx="13" cy="14" r="4" fill="#ddd" stroke="#111" stroke-width="1.500"/><path d="M12 10l2 7M16 4l4-2M18 9l2-1" stroke="#111" stroke-width="1.300"/></symbol>
<symbol id="lock" viewBox="0 0 20 20"><path d="M4.500 9V7q0-5 5.500-5t5.500 5v2" fill="none" stroke="#777" stroke-width="2"/><rect x="1.500" y="9" width="17" height="10" rx="1" fill="#686868" stroke="#555"/></symbol>
<symbol id="gglobe" viewBox="0 0 20 20"><path d="M5 1h10l5 6-1 5-8 7h-2l-8-7-1-5z" fill="#7a7a7a"/><path d="M0 7h20M2 12h16M10 1v18M6 1q-4 9 4 18M14 1q4 9-4 18" fill="none" stroke="#eee"/></symbol>
<symbol id="bub" viewBox="0 0 20 20"><path d="M4 2h12q4 1 4 6t-4 6l2 5-6-5H4q-4-1-4-6t4-6z" fill="#5c5c5c"/><path d="M4.500 8h2.500M9 8h2.500M13.500 8H16" stroke="#fff" stroke-width="2.300"/></symbol>
<symbol id="lens" viewBox="0 0 20 20"><circle cx="8" cy="8" r="6" fill="none" stroke="#8a8a8a" stroke-width="1.500"/><path d="M12.500 12.500l6 6" stroke="#8a8a8a" stroke-width="1.800"/></symbol>
<symbol id="ck" viewBox="0 0 20 20"><path d="M4 10l4.500 6L16 3" fill="none" stroke="#111" stroke-width="3"/></symbol>
<symbol id="puz" viewBox="0 0 20 20"><path d="M1 5h7v7H1z" fill="#e0bf2f"/><path d="M2 3h4v3H2zM1 12h8v7H1z" fill="#6bab4c"/><path d="M3 11h7v6H6z" fill="#e0bf2f"/><path d="M12 12q2-4 4 0h3v7h-8v-7z" fill="#c0282c"/><path d="M11 8l1-6 5-2 2 4-3 5z" fill="#4fb0e8"/><path d="M13 4l4 1" stroke="#fff" stroke-width="2"/></symbol>
<symbol id="dkr" viewBox="0 0 20 20"><rect x="1.500" y="1.500" width="17" height="17" rx="4" fill="#eee" stroke="#777" stroke-width="2"/><path d="M5 9h6v6H5zM8 9V5h7v6h-4" fill="none" stroke="#777" stroke-width="1.800"/></symbol>
<symbol id="dkx" viewBox="0 0 20 20"><rect x="1.500" y="1.500" width="17" height="17" rx="4" fill="#eee" stroke="#777" stroke-width="2"/><path d="M5 5l10 10M15 5L5 15" stroke="#666" stroke-width="3"/></symbol>
</defs>
</svg>

<header class="title"><svg class="logo" viewBox="0 0 20 20"><circle cx="9.500" cy="9.500" r="7" fill="#fff" stroke="#74983a" stroke-width="4.500"/><circle cx="9" cy="9" r="2.200" fill="#ef9b3a"/><path d="M11 11l7.500 7.500" stroke="#578022" stroke-width="4"/><path d="M11 11l3 3" stroke="#f0cf3b" stroke-width="3"/></svg><span>*Proyecto sin título — QGIS</span>
<svg class="win" viewBox="0 0 110 12"><path d="M1 6h10M50.500 3.500h7v7h-7zM52.500 3.500v-2h7v7h-2M99.500 1l10 10M109.500 1l-10 10" fill="none" stroke="#222"/></svg></header>
<nav class="menu"><span>Pro<u>y</u>ecto</span><span><u>E</u>ditar</span><span><u>V</u>er</span><span><u>C</u>apa</span><span>Con<u>f</u>iguración</span><span>Co<u>m</u>plementos</span><span>Vect<u>o</u>rial</span><span><u>R</u>áster</span><span>Base de <u>d</u>atos</span><span><u>W</u>eb</span><span><u>M</u>alla</span><span>Pro<u>c</u>esos</span><span>LAD<u>M</u>-COL</span><span>A<u>y</u>uda</span></nav>

<div class="bar">
<div class="grp"><svg><use href="#new"/></svg><svg><use href="#open"/></svg><svg><use href="#save"/></svg><svg><use href="#lay"/></svg><svg><use href="#laym"/></svg><svg><use href="#sty"/></svg></div>
<div class="grp"><svg class="on"><use href="#pan"/></svg><svg><use href="#pansel"/></svg><svg><use href="#zin"/></svg><svg><use href="#zout"/></svg><svg><use href="#zfull"/></svg><svg class="off"><use href="#zsel"/></svg><svg class="off"><use href="#mag"/></svg><svg class="off"><use href="#z11"/></svg><svg><use href="#zprev"/></svg><svg class="off"><use href="#znext"/></svg><svg><use href="#map1"/></svg><svg><use href="#map3"/></svg><svg><use href="#bmk"/></svg><svg><use href="#bmks"/></svg><svg><use href="#clock"/></svg><svg><use href="#ref"/></svg></div>
<div class="grp"><svg class="off"><use href="#ident"/></svg><svg><use href="#table"/></svg><svg><use href="#abac"/></svg><svg><use href="#gear"/></svg><svg><use href="#sigma"/></svg><svg><use href="#ruler"/></svg><i class="ar"></i><svg><use href="#tip"/></svg><svg class="off"><use href="#act"/></svg><i class="ar dim"></i><svg><use href="#txt"/></svg><i class="ar"></i></div>
<div class="grp"><svg><use href="#help"/></svg></div>
<div class="grp"><svg><use href="#globe1"/></svg><svg><use href="#globe2"/></svg><svg><use href="#globe3"/></svg></div>
</div>
<div class="bar">
<div class="grp wide"><svg><use href="#vlayer"/></svg><svg><use href="#gpkgn"/></svg><svg><use href="#shp"/></svg><svg><use href="#fean"/></svg><svg><use href="#chip"/></svg><i class="sp"></i><svg><use href="#virt"/></svg><i class="sp"></i></div>
<div class="grp"><svg><use href="#lab"/></svg><svg><use href="#pie"/></svg><i class="sp w"></i><svg><use href="#labb"/></svg><svg><use href="#labr"/></svg><i class="sp w"></i><svg><use href="#labp"/></svg><svg><use href="#labn"/></svg><svg><use href="#labn"/></svg><svg><use href="#labn"/></svg><svg><use href="#labn"/></svg></div>
<div class="grp"><svg><use href="#py"/></svg><svg><use href="#comp"/></svg><svg><use href="#rel"/></svg><i class="ar"></i><svg><use href="#fish"/></svg><svg><use href="#fish"/></svg></div>
<div class="grp"><svg><use href="#cad1"/></svg><svg><use href="#cad2"/></svg><svg><use href="#pts"/></svg><i class="ar dim"></i><svg><use href="#blob"/></svg><svg><use href="#hex"/></svg><svg><use href="#ring"/></svg><svg><use href="#blob2"/></svg><svg><use href="#ring"/></svg><svg><use href="#ring"/></svg><svg><use href="#blob2"/></svg><svg><use href="#horn"/></svg><svg><use href="#saus"/></svg><svg><use href="#vtx"/></svg><svg><use href="#crs"/></svg><svg><use href="#cutb"/></svg><svg><use href="#cutb"/></svg><svg><use href="#tail"/></svg><svg><use href="#algn"/></svg></div>
<b class="more">»</b><div class="grp"></div>
</div>
<div class="bar">
<div class="grp"><svg><use href="#sel"/></svg><i class="ar dim"></i><svg><use href="#self"/></svg><i class="ar"></i><svg><use href="#desel"/></svg><i class="ar"></i><svg><use href="#selv"/></svg></div>
<div class="grp"><svg><use href="#ant"/></svg><svg><use href="#dbin"/></svg><svg><use href="#dbout"/></svg></div>
<div class="grp"><svg><use href="#pens"/></svg><svg><use href="#pen"/></svg><svg><use href="#saven"/></svg><svg><use href="#addf"/></svg><svg><use href="#vt"/></svg><i class="ar dim"></i><svg><use href="#multi"/></svg><svg><use href="#del"/></svg><svg><use href="#cut"/></svg><svg><use href="#copy"/></svg><svg><use href="#paste"/></svg><svg><use href="#undo"/></svg><svg><use href="#redo"/></svg></div>
</div>
<div class="bar">
<div class="grp"><div class="btn b1"><b>ST</b><span>Sistema de Transición</span><i class="ar"></i></div><i class="sp"></i><div class="btn b2"><svg><use href="#puz"/></svg><span>Crear objetos de Levantamiento</span><i class="ar"></i></div><i class="sp w"></i><svg><use href="#stack"/></svg><i class="sp w"></i><svg><use href="#saveg"/></svg><svg><use href="#tri"/></svg><svg><use href="#nodes"/></svg><i class="sp w"></i><svg><use href="#dbs"/></svg><svg><use href="#dbs"/></svg><i class="sp w"></i><svg><use href="#wrench"/></svg></div>
</div>

<main class="work">
<aside class="side">
<section class="nav">
<h2><span>Navegador</span><svg><use href="#dkr"/></svg><svg><use href="#dkx"/></svg></h2>
<div class="tools"><svg><use href="#addl"/></svg><svg><use href="#ref"/></svg><svg><use href="#filt"/></svg><svg><use href="#coll"/></svg><svg><use href="#info"/></svg></div>
<div class="box">
<ul class="tree">
<li><svg><use href="#fav"/></svg>Favoritos</li>
<li class="x"><svg><use href="#bmks"/></svg>Marcadores espaciales</li>
<li class="x"><svg><use href="#home"/></svg>Inicio</li>
<li class="x"><svg><use href="#fold"/></svg>C:\</li>
<li class="x"><svg><use href="#gpkg"/></svg>GeoPackage</li>
<li><svg><use href="#fea"/></svg>SpatiaLite</li>
<li><svg><use href="#pg"/></svg>PostGIS</li>
<li><svg><use href="#ms"/></svg>MSSQL</li>
<li><svg><use href="#ora"/></svg>Oracle</li>
<li><svg><use href="#db2"/></svg>DB2</li>
<li><svg><use href="#wms"/></svg>WMS/WMTS</li>
<li><svg><use href="#vtl"/></svg>Vector Tiles</li>
<li class="x"><svg><use href="#xyz"/></svg>XYZ Tiles</li>
<li><svg><use href="#wcs"/></svg>WCS</li>
<li><svg><use href="#wfs"/></svg>WFS / OGC API - Features</li>
<li><svg><use href="#ows"/></svg>OWS</li>
<li class="x"><svg><use href="#arc"/></svg>ArcGIS Map Service</li>
<li><svg><use href="#wfs"/></svg>ArcGIS Feature Service</li>
</ul>
<div class="vs v1"><i class="up"></i><i class="th1"></i><i class="th2"></i><i class="dn"></i></div>
</div>
</section>
<section class="cap">
<h2><span>Capas</span><svg><use href="#dkr"/></svg><svg><use href="#dkx"/></svg></h2>
<div class="tools"><svg><use href="#brush"/></svg><svg><use href="#grpn"/></svg><svg><use href="#eye"/></svg><svg><use href="#filt"/></svg><em>ε</em><i class="ar"></i><svg><use href="#expa"/></svg><svg><use href="#coll"/></svg><svg><use href="#reml"/></svg></div>
<div class="box">
<ul class="layers">
<li><svg class="c"><use href="#ck"/></svg><i class="s c1"></i><b>U_PERIMETRO</b></li>
<li><svg class="c"><use href="#ck"/></svg><i class="l c2"></i><b>U_NOMENCLATURA_DOMICILIARIA</b></li>
<li><svg class="c"><use href="#ck"/></svg><i class="s c3"></i><b>U_SECTOR</b></li>
<li><svg class="c"><use href="#ck"/></svg><i class="s c4"></i><b>U_MANZANA</b></li>
<li><svg class="c"><use href="#ck"/></svg><i class="s c5"></i><b>R_SECTOR</b></li>
<li><svg class="c"><use href="#ck"/></svg><i class="s c6"></i><b>R_TERRENO</b></li>
<li><svg class="c"><use href="#ck"/></svg><i class="s c7"></i><b>R_UNIDAD</b></li>
<li><svg class="c"><use href="#ck"/></svg><i class="s c8"></i><b>R_VEREDA</b></li>
<li><svg class="c"><use href="#ck"/></svg><i class="s c9"></i><b>R_CONSTRUCCION</b></li>
<li><svg class="c"><use href="#ck"/></svg><i class="l c10"></i><b>R_NOMENCLATURA_DOMICILIARIA</b></li>
<li><svg class="c"><use href="#ck"/></svg><i class="s c11"></i><b>U_CONSTRUCCION</b></li>
<li><svg class="c"><use href="#ck"/></svg><i class="s c12"></i><b>U_TERRENO</b></li>
<li><svg class="c"><use href="#ck"/></svg><i class="s c13"></i><b>U_UNIDAD</b></li>
<li class="tb"><svg class="c"><use href="#ck"/></svg><svg class="g"><use href="#grp"/></svg>tables</li>
<li class="gc"><svg class="g"><use href="#table"/></svg><b>(GC) Predio Catastro</b></li>
</ul>
<div class="vs v2"><i class="up"></i><i class="th1"></i><i class="th2"></i><i class="th3"></i><i class="dn"></i></div>
</div>
<div class="hs"><i class="lf"></i><i class="tr"></i><i class="hd"></i><i class="rt"></i></div>
</section>
</aside>
<div class="canvas">
<svg class="map" viewBox="255 162 1366 647">
<g class="land"><path d="M842.300 179.700L1259.300 355.700 1044.700 791 810 692 617.300 614 668.300 504.300 860.300 584 865 573.300 674 495.300 801.700 253.300 798.300 212z"/></g>
<g transform="translate(600 170) scale(.33333)"><g class="ln"><path d="M915 112L841 277M605 250L666 267 841 277 955 317 1057 393M588 281L647 303 766 304 812 309 906 341 1057 467M625 297L595 356 557 340M906 341L798 624M473 499L798 624 968 689 1196 777M414 607L498 643 760 750 1280 962M498 643L432 780M341 745L432 780 580 845 690 886 742 911M760 750L690 886M265 893L512 990M1018 855L950 992M1057 467L968 689"/></g>
<g class="bd"><path d="M722 124L752 135 747 150 824 177 807 220 748 202 740 220 720 217 716 214 667 200 681 166 702 172zM732 322L869 350 840 474 806 467 809 450 706 431zM914 454L947 464 945 471 999 487 965 578 911 563 907 571 873 560zM649 603L687 619 675 653 634 637zM690 603L704 609 699 620 685 616zM487 673L502 681 499 694 533 713 512 761 468 746 465 760 446 752zM617 733L661 750 639 799 595 781zM661 750L719 773 702 815 644 792zM375 810L424 827 431 813 462 825 455 847 486 858 468 899 431 886 419 907 355 880 367 858 357 854z"/></g></g>
<g transform="translate(920 170) scale(.33333)"><g class="ln"><path d="M187 210L97 393M97 393L150 450Q165 466 182 466L223 439 313 469 555 555 800 656M396 298L313 469M632 397L555 555M873 498L742 795M97 467L200 578 307 633 583 737 742 795 870 848M307 633L236 777M583 737L516 880M236 777L378 831 516 880 798 993M378 831L320 962 245 1096M60 859L320 962"/></g>
<g class="bd"><path d="M36 267L104 312 81 342 13 297zM122 697L161 707 157 719 119 710zM359 693L397 706 403 697 428 707 424 727 454 737 446 762 470 771 457 801 426 791 422 801 361 777 367 763 324 745 338 716 347 716zM825 681L876 701 882 694 906 706 875 768 867 765 851 795 790 767 803 741 812 744 827 720 808 713zM876 720L891 726 886 740 871 737zM732 831L789 856 794 850 803 856 801 862 820 871 788 938 765 933 758 945 740 937 744 925 725 915 713 920 693 909z"/></g>
<path class="hand" d="M695 900L682 884Q681 876 693 882L690 860Q694 854 698 862L702 876 701 854Q705 848 709 856L711 876 713 856Q719 850 720 860L720 878 722 864Q727 860 727 872L722 894 716 905 702 905z"/></g>
<g transform="translate(600 470) scale(.33333)"><g class="ln"><path d="M580-55L508 92 471 178M742 11L635 243M742 11L950 92 1135 171M495 186L553 62 692 114M908 83L795 310M781 342L630 666M149 228L341 300 534 376M107 319L290 398M393 185L241 506M490 225L338 545M587 264L434 585M686 309L529 624M636 414L732 450M764 722L806 634 887 666M960 530L849 758M904 645L980 673 924 791"/></g>
<g class="bd"><path d="M388 19L427 36 419 54 381 42zM358 48L449 83 432 125 340 90zM576 94L638 117 616 174 550 151zM722 72L755 85 742 112 711 100zM871 65L908 76 897 101 862 88zM748 143A15 15 0 0 1 777 154zM715 130L840 178 817 247 788 236 786 231 689 196zM680 208a17 17 0 0 1 34 0 17 17 0 0 1-34 0zM425 214L472 231 436 308 386 288 396 262 388 258 399 237 415 237zM459 229L427 303M488 243L527 262 520 283 524 286 503 325 453 306zM156 263L181 272 187 261 198 266 194 284 212 290 216 276 264 293 241 344 137 303zM107 319L151 340 140 362 111 353 90 403 117 416 113 426 152 443 142 467 52 432zM111 353L140 362 117 416 90 403zM70 438L80 414 113 426M184 381L248 405 223 461 190 448 186 455 155 443zM352 387L383 399 343 490 309 477 315 459 291 445 289 427 301 407 317 407 323 396 344 402zM449 422L486 436 433 535 420 532 415 544 376 528 382 503 396 506 438 448zM438 446L472 458M737 330L766 340 738 410 703 398 720 360zM735 330L718 362 728 367 746 334M709 387L728 396 725 404M630 478L680 497 653 558 599 539zM832 666L877 682 859 731 825 718 816 722 802 712 806 690 816 682 822 682zM931 649L978 680 961 716 937 709 922 737 888 722 893 698 882 692 898 655 917 660zM976 716L1011 732 986 778 949 762z"/></g>
<path class="yd" d="M116 445L128 448 124 459 113 456zM904 645L921 650 917 660 901 655zM953 663L980 673 974 683 950 675zM853 706L867 712 862 719 850 715z"/></g>
<g transform="translate(920 470) scale(.33333)"><g class="ln"><path d="M175 171L245 196 303 222 663 369M175 171L0 530M124 278L248 327 303 222"/></g>
<g class="bd"><path d="M415 199L452 214 446 229 485 246 469 288 391 256zM354 243L405 264 383 314 330 292zM405 266L455 287 450 299 426 290 414 305 393 301zM487 301L519 312 508 341 475 329zM155 346L192 361 174 402 121 381 129 362 147 366zM77 449L133 471 119 504 86 490 81 503 54 491zM40 511L90 532 75 563 48 552 38 575-8 554 8 520 33 528zM493 452L543 474 519 521 467 498zM299 546L352 566 334 609 279 590zM89 616L138 633 119 684 68 666zM279 640L333 638 336 701 304 701 301 663 280 661zM417 598L490 628 460 688 388 659zM353 742L425 771 356 917 283 888zM341 769L413 797M230 806L259 818 256 827 282 837 272 867 242 857 239 866 205 854z"/></g></g>
</svg>
</div>
</main>

<footer class="status">
<div class="find"><svg><use href="#lens"/></svg><span>Escriba para localizar (Ctrl+K)</span></div>
<span class="f1">Coordenada</span><span class="in f2">4882129.5,2093656.1</span><svg class="k1"><use href="#cen"/></svg>
<span class="f3">Escala</span><span class="in f4">1:1680<i class="ar"></i></span><svg class="k2"><use href="#lock"/></svg>
<span class="f5">Amplificador</span><span class="in f6">100%<i class="spin"></i></span>
<span class="f7">Rotación</span><span class="in f8">0,0 °<i class="spin"></i></span>
<svg class="c"><use href="#ck"/></svg><span class="f9">Representar</span>
<svg class="k3"><use href="#gglobe"/></svg><span class="f10">EPSG:9377</span><svg class="k4"><use href="#bub"/></svg>
</footer>
</body>
</html>
```

FILE: styles.css
```css
* { box-sizing: border-box; }
html, body { margin: 0; height: 100%; overflow: hidden; }
body { display: flex; flex-direction: column; width: 1622px; height: 835px; background: #efeef0; color: #333; font: 12.050px/17px "Open Sans", "Noto Sans", sans-serif; border-bottom: 2px solid #2b2b2b; }
.defs { position: absolute; width: 0; height: 0; }
svg { display: block; flex: none; overflow: visible; }
i { display: block; flex: none; }

.title { display: flex; align-items: center; height: 22px; background: #fff; padding: 0 22px 2px 2px; flex: none; color: #222; }
.title .logo { width: 17px; height: 17px; margin-right: 4px; }
.title .win { width: 110px; height: 12px; margin-left: auto; }
.menu { display: flex; gap: 12.4px; height: 19px; padding-left: 9px; flex: none; align-items: center; border-bottom: 1px solid #dddcde; }
.menu u { text-underline-offset: 1px; }

.bar { display: flex; align-items: center; height: 30px; flex: none; gap: 3.200px; background: linear-gradient(#f9f8fa, #f0eff1); border-bottom: 1px solid #d0cfd1; }
.grp { display: flex; align-items: center; height: 29px; padding-left: 12px; background: repeating-linear-gradient(#cfced0 0 1px, transparent 1px 3px) 4px 6px / 4px 16px no-repeat; }
.grp > svg { width: 20px; height: 20px; margin: 0 3.920px; }
.grp > svg.on { width: 28px; height: 24px; padding: 2px 4px; margin: 0; background: #dcdbdd; border: 1px solid #a9a8aa; border-radius: 2px; }
.grp.wide { margin-right: 3px; }
.off { filter: grayscale(1); opacity: .33; }
.off2 { filter: grayscale(1); }
.ar { width: 13px; height: 5px; background: #555; clip-path: polygon(2.500px 0, 10.500px 0, 6.500px 5px); }
.ar.dim { background: #aaa; }
.sp { width: 5px; height: 18px; background: linear-gradient(#d5d4d6, #d5d4d6) 2px 0 / 1px 18px no-repeat; }
.sp.w { width: 7px; }
.more { margin-left: 19px; margin-right: 1px; color: #111; font-size: 15px; width: 12px; }
.btn { display: flex; align-items: center; height: 21px; border: 1px solid #b9b8ba; border-radius: 2px; background: linear-gradient(#fff, #f3f2f4); font: 10.500px/18px "DejaVu Sans", sans-serif; letter-spacing: -.35px; color: #222; white-space: nowrap; }
.btn b { font: bold 12px/16px "Open Sans", sans-serif; padding: 0 4px 3px 0; letter-spacing: 0; }
.btn .ar { width: 12px; margin-left: -2px; }
.b1 { width: 149px; padding-left: 11px; }
.b2 { width: 195px; padding-left: 9px; margin-left: 2px; letter-spacing: -.47px; }
.b2 svg { width: 17px; height: 16px; margin-right: 1px; }
.ti { font: 8px "DejaVu Sans", sans-serif; fill: #444; }
.t11 { font: bold 6px "DejaVu Sans", sans-serif; }
.tt { font: bold 12px "Liberation Serif", serif; fill: #444; }
.th { font: bold 12px "Liberation Serif", serif; fill: #fff; }
.ta { font: bold 6.500px "DejaVu Sans", sans-serif; fill: #b5b4b4; }
.ta.dk { fill: #223; }
.ta.rd { fill: #dc2340; }
.td { font: 8px "DejaVu Sans", sans-serif; fill: #dbe8f5; }
.r { fill: #d6454a; } .g { fill: #6c9f7a; } .b { fill: #6694b4; }
.gg { fill: #dbdada; stroke: #c3c2c2; }
.gn { fill: #8cae83; stroke: #3e5a38; }

.work { display: flex; height: 648px; flex: none; }
.side { width: 255px; flex: none; border-right: 1px solid #c9c8ca; }
h2 { display: flex; align-items: center; gap: 2px; margin: 0; height: 17px; padding: 0 7px 0 3px; font: 12.3px/17px "Open Sans", sans-serif; }
h2 span { flex: 1; }
h2 svg { width: 10px; height: 10px; }
.tools { display: flex; align-items: center; gap: 8.300px; height: 19px; padding-left: 6.500px; }
.tools svg { width: 13px; height: 13px; }
.tools em { font: italic 13px/12px "DejaVu Serif", serif; width: 12px; color: #555; }
.tools .ar { margin: 0 -4.500px; }
.nav { height: 340px; }
.nav .box { height: 300px; margin-top: 3px; }
.box { display: flex; width: 249px; background: #fff; border: 1px solid #c4c3c5; overflow: hidden; }
ul { list-style: none; margin: 0; padding: 0; width: 232px; overflow: hidden; flex: none; }
li { display: flex; align-items: center; height: 17px; white-space: nowrap; }
.tree { padding-top: 0; }
.tree li { padding-left: 23px; }
.tree li svg { width: 16px; height: 15px; margin-right: 6px; }
.tree li.x { padding-left: 8px; }
.tree li.x::before { content: ""; width: 5px; height: 7px; margin-right: 10px; background: #666; clip-path: polygon(0 0, 100% 50%, 0 100%); }
.vs { display: flex; flex-direction: column; width: 15px; border-left: 1px solid #cccbcd; background: #f6f5f7; }
.vs i { border-bottom: 1px solid #c4c3c5; }
.vs .up, .vs .dn { height: 13px; background: #f4f3f5; display: flex; justify-content: center; align-items: center; }
.vs .dn { margin-top: auto; border: 0; }
.up::before, .dn::before { content: ""; width: 8px; height: 4px; background: #555; clip-path: polygon(50% 0, 100% 100%, 0 100%); }
.dn::before { clip-path: polygon(0 0, 100% 0, 50% 100%); }
.v1 .th1 { height: 244px; }
.v1 .th2 { height: 29px; background: #dedde0; }
.cap { padding-top: 4px; }
.cap .tools { margin: 2px 0 0; height: 20px; }
.cap .box { height: 252px; border-bottom: 0; }
.layers li { padding-left: 44.500px; color: #111; }
.layers li:first-child { margin-top: -3.500px; }
.c { width: 14px; height: 13px; background: #fff; border: 1px solid #bcbbbd; padding: 0; }
.layers .s { width: 16px; height: 15px; margin: 0 5.500px 0 5px; border: 1px solid #555; }
.layers .l { width: 16px; height: 1px; margin: 0 5.500px 0 5px; }
.layers b { font-weight: 700; font-size: 12.3px; }
.c1 { background: #8fb073; } .c2 { background: #a3aeb8; } .c3 { background: #975328; } .c4 { background: #bcae96; } .c5 { background: #b84240; } .c6 { background: #e8ac2a; } .c7 { background: #e35584; } .c8 { background: #bdc150; } .c9 { background: #9977ba; } .c10 { background: #dfab70; } .c11 { background: #b54247; } .c12 { background: #ff9d18; } .c13 { background: #e0668b; }
.layers li.tb { padding-left: 7px; color: #444; }
.tb::before { content: ""; width: 8px; height: 5px; margin-right: 9px; background: #666; clip-path: polygon(0 0, 100% 0, 50% 100%); }
.layers .g { width: 15px; height: 15px; margin: 0 6px; }
.layers .gc { background: #efeef0; text-decoration: underline; }
.layers .gc b { font-size: 12px; }
.gc .g { margin-left: 1px; }
.v2 .th1 { height: 121px; background: #e3e2e5; }
.v2 .th2 { height: 86px; }
.v2 .th3 { height: 19px; background: #e3e2e5; }
.hs { display: flex; width: 249px; height: 13px; border: 1px solid #c4c3c5; background: #f6f5f7; }
.hs i { border-right: 1px solid #c4c3c5; display: flex; align-items: center; justify-content: center; }
.lf { width: 14px; } .tr { width: 157px; background: #fff; } .hd { width: 48px; background: #dedde0; } .rt { width: 14px; }
.lf::before, .rt::before { content: ""; width: 4px; height: 7px; background: #555; clip-path: polygon(100% 0, 100% 100%, 0 50%); }
.rt::before { clip-path: polygon(0 0, 100% 50%, 0 100%); }

.canvas { flex: 1; background: #fefdfe; border-top: 1px solid #c9c8ca; }
.map { width: 1366px; height: 647px; }
.land path { fill: #ff9d18; stroke: #45382a; stroke-width: 1.200; }
.ln path { fill: none; stroke: #55330a; stroke-width: 3.800; }
.bd path { fill: #b54247; stroke: #50231a; stroke-width: 3.500; }
.yd { fill: #f5a52b; stroke: #50231a; stroke-width: 2; }
.hand { fill: #fff; stroke: #222; stroke-width: 2.500; }

.status { display: flex; align-items: center; height: 25px; flex: none; border-top: 1px solid #d0cfd1; font: 10.500px/16px "DejaVu Sans", sans-serif; letter-spacing: -.3px; color: #333; white-space: nowrap; }
.find { display: flex; align-items: center; width: 258px; height: 18px; margin-left: 4px; background: #fff; border: 1px solid #c4c3c5; border-radius: 2px; padding-left: 6px; color: #888; margin-right: 523px; letter-spacing: -.55px; }
.find svg { width: 11px; height: 11px; margin-right: 6px; }
.in { display: flex; align-items: center; height: 18px; background: #fff; border: 1px solid #bab9bb; border-radius: 2px; padding-left: 5px; color: #222; }
.in .ar, .in .spin { margin-left: auto; }
.f1 { width: 62px; } .f2 { width: 116px; padding-left: 4px; letter-spacing: -.68px; }
.k1 { width: 16px; height: 16px; margin: 0 12px 0 3px; }
.f3 { width: 33px; } .f4 { width: 79px; padding-left: 3px; padding-right: 6px; }
.k2 { width: 14px; height: 16px; margin: 0 6px 0 10px; }
.f5 { width: 64px; } .f6 { width: 78px; padding-left: 3px; }
.f7 { width: 49px; margin-left: 8px; } .f8 { width: 75px; padding-left: 4px; margin-right: 5px; }
.f9 { margin-left: 6px; width: 73px; }
.k3 { width: 16px; height: 14px; margin-right: 4px; }
.f10 { width: 71px; }
.k4 { width: 17px; height: 14px; }
.spin { width: 14px; height: 16px; border-left: 1px solid #c9c8ca; display: flex; flex-direction: column; align-items: center; justify-content: center; gap: 2px; }
.spin::before, .spin::after { content: ""; width: 8px; height: 4px; background: #555; clip-path: polygon(50% 0, 100% 100%, 0 100%); }
.spin::after { clip-path: polygon(0 0, 100% 0, 50% 100%); }
```
